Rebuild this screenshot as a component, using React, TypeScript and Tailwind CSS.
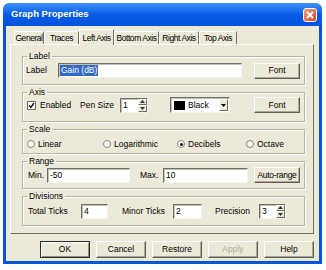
import React from "react";

const tabs = [
  { name: "General", w: "w-[30px]" },
  { name: "Traces", w: "w-[35px]" },
  { name: "Left Axis", w: "w-[35px]", active: true },
  { name: "Bottom Axis", w: "w-[45px]" },
  { name: "Right Axis", w: "w-[40px]" },
  { name: "Top Axis", w: "w-[38px]" },
];

const sunken =
  "bg-white border border-t-[#6f6d66] border-l-[#6f6d66] border-r-[#f4f3ee] border-b-[#f4f3ee] shadow-[inset_1px_1px_0_#c3c0b3]";

function Btn({ children, w = "w-[46px]", def, disabled }: { children: React.ReactNode; w?: string; def?: boolean; disabled?: boolean }) {
  return (
    <div
      className={`${w} h-full flex items-center justify-center whitespace-nowrap bg-[#ece9d8] border ${
        def
          ? "border-[#2b2b2b] shadow-[inset_1px_1px_0_#fff,inset_-1px_-1px_0_#8d8a7e]"
          : "border-t-white border-l-white border-r-[#5f5d55] border-b-[#5f5d55] shadow-[inset_-1px_-1px_0_#aca899]"
      } ${disabled ? "text-[#aca899]" : ""}`}
    >
      {children}
    </div>
  );
}

function Spin({ value, w }: { value: string; w: string }) {
  return (
    <div className={`${w} h-[15px] flex ${sunken}`}>
      <span className="flex-1 pl-[2px] leading-[13px]">{value}</span>
      <div className="w-[9px] flex flex-col">
        <div className="flex-1 flex items-center justify-center bg-[#ece9d8] border border-t-white border-l-white border-r-[#716f64] border-b-[#716f64]">
          <svg width="5" height="3" viewBox="0 0 5 3"><path d="M0 3h5L2.5 0z" fill="#333" /></svg>
        </div>
        <div className="flex-1 flex items-center justify-center bg-[#ece9d8] border border-t-white border-l-white border-r-[#716f64] border-b-[#716f64]">
          <svg width="5" height="3" viewBox="0 0 5 3"><path d="M0 0h5L2.5 3z" fill="#333" /></svg>
        </div>
      </div>
    </div>
  );
}

function Radio({ label, checked, w }: { label: string; checked?: boolean; w: string }) {
  return (
    <div className={`${w} flex items-center gap-[3px]`}>
      <span className="w-[8px] h-[8px] rounded-full bg-white border border-[#8a887e] flex items-center justify-center">
        {checked && <span className="w-[3px] h-[3px] rounded-full bg-black" />}
      </span>
      <span>{label}</span>
    </div>
  );
}

function Group({ title, h, children }: { title: string; h: string; children: React.ReactNode }) {
  return (
    <fieldset className={`${h} border border-[#b9b6a8] shadow-[1px_1px_0_#fff,inset_1px_1px_0_#fff] px-0`}>
      <legend className="ml-[4px] px-[2px] leading-[10px]">{title}</legend>
      {children}
    </fieldset>
  );
}

export default function App() {
  return (
    <div className="w-[326px] h-[270px] bg-white pl-[3px] pt-[3px] font-['Liberation_Sans',Arial,sans-serif] text-[8.5px] text-black">
      <div className="w-[319px] h-[261px] flex flex-col rounded-t-[6px] overflow-hidden">
        <div className="h-[23px] flex items-center justify-between pl-[8px] pr-[5px] bg-gradient-to-b from-[#3c92fb] via-[#0a5be6] to-[#0553dc]">
          <span className="text-white font-bold text-[9.5px]">Graph Properties</span>
          <div className="w-[14px] h-[14px] rounded-[3px] border border-white bg-gradient-to-br from-[#f09a7c] to-[#d44a22] flex items-center justify-center">
            <svg width="8" height="8" viewBox="0 0 8 8"><path d="M1 1l6 6M7 1L1 7" stroke="#fff" strokeWidth="1.8" /></svg>
          </div>
        </div>
        <div className="flex-1 flex flex-col bg-[#ece9d8] border-x-[3px] border-b-[3px] border-[#0855dd]">
          <div className="h-[16px] mt-[2px] flex items-end pl-[8px] relative z-10 tracking-[-0.45px] whitespace-nowrap">
            {tabs.map((t) =>
              t.active ? (
                <div key={t.name} className={`${t.w} h-[16px] -mb-px flex items-start justify-center pt-[2px] bg-[#ece9d8] border-t border-l border-r border-t-white border-l-white border-r-[#716f64]`}>
                  {t.name}
                </div>
              ) : (
                <div key={t.name} className={`${t.w} h-[13px] flex items-center justify-center border-t border-l border-r border-t-white border-l-white border-r-[#716f64]`}>
                  {t.name}
                </div>
              )
            )}
          </div>
          <div className="ml-[4px] w-[304px] h-[190px] border border-t-white border-l-white border-r-[#716f64] border-b-[#716f64] pt-[6px] pl-[11px] flex flex-col gap-[2px]">
            <div className="w-[283px] flex flex-col gap-[2px]">
              <Group title="Label" h="h-[34px]">
                <div className="h-[15px] mt-[2px] flex items-center pl-[3px]">
                  <span className="w-[32px]">Label</span>
                  <div className={`w-[184px] h-[15px] flex items-center pl-[1px] ${sunken}`}>
                    <span className="bg-[#316ac5] text-white px-[1px] leading-[11px]">Gain (dB)</span>
                  </div>
                  <div className="ml-[12px] h-[16px]"><Btn>Font</Btn></div>
                </div>
              </Group>
              <Group title="Axis" h="h-[35px]">
                <div className="h-[16px] flex items-center pl-[4px]">
                  <span className="w-[9px] h-[9px] bg-white border border-[#6f6d66] flex items-center justify-center">
                    <svg width="7" height="7" viewBox="0 0 7 7"><path d="M1 3.5l1.8 2L6 1.2" stroke="#000" strokeWidth="1.4" fill="none" /></svg>
                  </span>
                  <span className="ml-[4px] w-[40px]">Enabled</span>
                  <span className="w-[40px]">Pen Size</span>
                  <Spin value="1" w="w-[28px]" />
                  <div className={`ml-[22px] w-[60px] h-[16px] flex items-center pl-[3px] ${sunken}`}>
                    <span className="w-[11px] h-[9px] bg-black" />
                    <span className="ml-[3px] flex-1">Black</span>
                    <div className="w-[9px] h-[12px] mr-[1px] flex items-center justify-center bg-[#ece9d8] border border-t-white border-l-white border-r-[#716f64] border-b-[#716f64]">
                      <svg width="5" height="3" viewBox="0 0 5 3"><path d="M0 0h5L2.5 3z" fill="#000" /></svg>
                    </div>
                  </div>
                  <div className="ml-[24px] h-[16px]"><Btn>Font</Btn></div>
                </div>
              </Group>
              <Group title="Scale" h="h-[30px]">
                <div className="h-[10px] mt-[5px] flex items-center pl-[4px]">
                  <Radio label="Linear" w="w-[76px]" />
                  <Radio label="Logarithmic" w="w-[74px]" />
                  <Radio label="Decibels" w="w-[69px]" checked />
                  <Radio label="Octave" w="w-[50px]" />
                </div>
              </Group>
              <Group title="Range" h="h-[33px]">
                <div className="h-[16px] mt-[1px] flex items-center pl-[5px]">
                  <span className="w-[19px]">Min.</span>
                  <div className={`w-[83px] h-[15px] pl-[2px] leading-[13px] ${sunken}`}>-50</div>
                  <span className="ml-[10px] w-[23px]">Max.</span>
                  <div className={`w-[85px] h-[15px] pl-[2px] leading-[13px] ${sunken}`}>10</div>
                  <div className="ml-[6px] h-[16px] tracking-[-0.3px]"><Btn>Auto-range</Btn></div>
                </div>
              </Group>
              <Group title="Divisions" h="h-[35px]">
                <div className="h-[16px] mt-[2px] flex items-center pl-[5px]">
                  <span className="w-[53px]">Total Ticks</span>
                  <div className={`w-[27px] h-[15px] pl-[2px] leading-[13px] ${sunken}`}>4</div>
                  <span className="ml-[14px] w-[51px]">Minor Ticks</span>
                  <div className={`w-[29px] h-[15px] pl-[2px] leading-[13px] ${sunken}`}>2</div>
                  <span className="ml-[13px] w-[44px]">Precision</span>
                  <Spin value="3" w="w-[27px]" />
                </div>
              </Group>
            </div>
          </div>
          <div className="mt-[7px] h-[17px] flex gap-[6px] pl-[34px]">
            <Btn w="w-[50px]" def>OK</Btn>
            <Btn w="w-[50px]">Cancel</Btn>
            <Btn w="w-[50px]">Restore</Btn>
            <Btn w="w-[50px]" disabled>Apply</Btn>
            <Btn w="w-[50px]">Help</Btn>
          </div>
        </div>
      </div>
    </div>
  );
}
